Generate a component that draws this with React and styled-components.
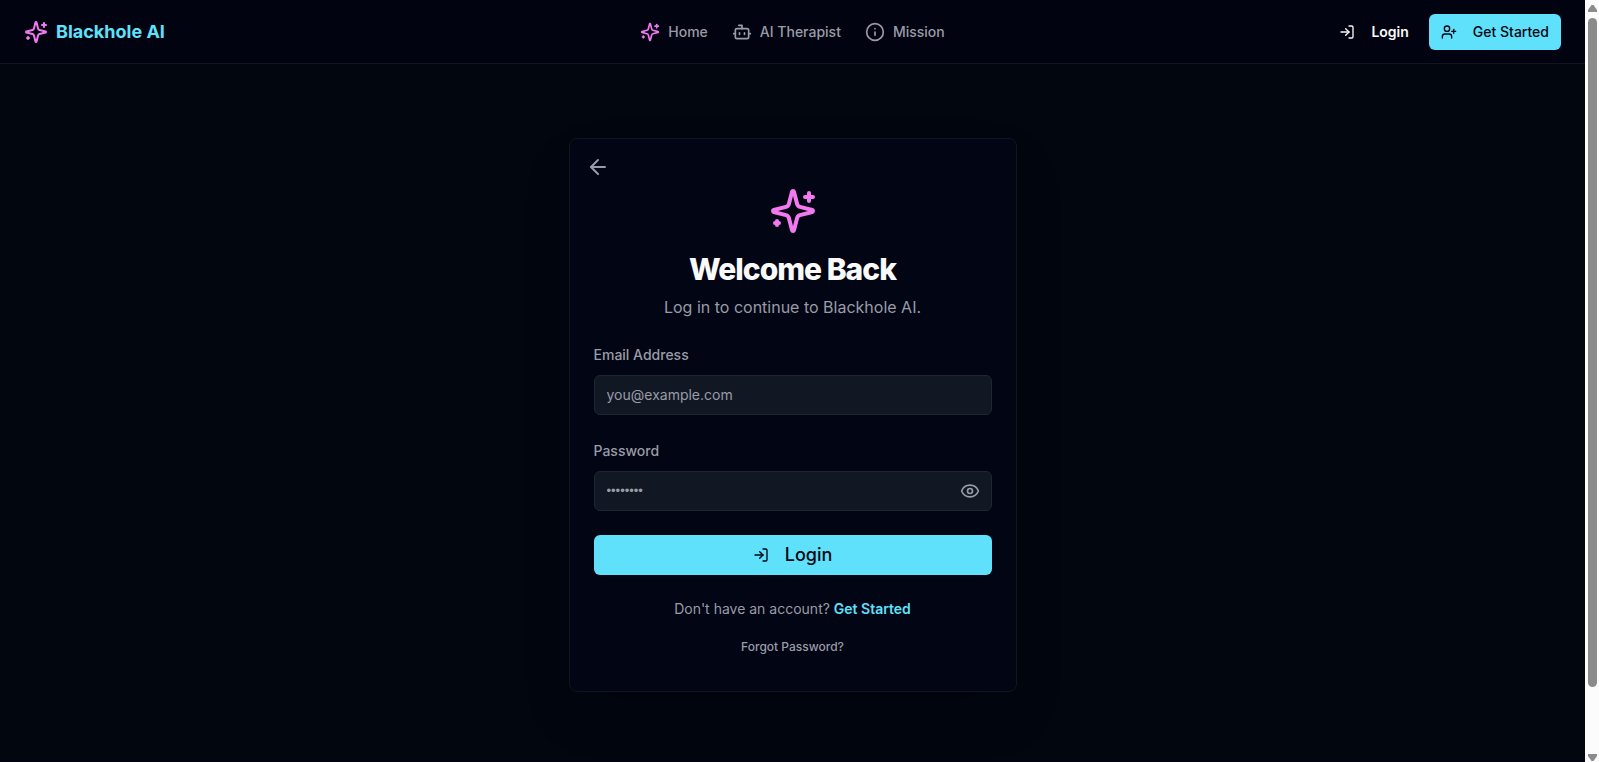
import React, { useState } from "react";
import styled, { createGlobalStyle } from "styled-components";
import { ArrowLeft, Bot, Eye, Info, LogIn, UserPlus } from "lucide-react";

const color = {
  page: "#02060f",
  header: "#020310",
  card: "#020513",
  line: "#10151f",
  field: "#111823",
  fieldLine: "#1d2932",
  cyan: "#5fe1fc",
  pink: "#f478f0",
  text: "#fafafa",
  muted: "#999ca7",
  ink: "#02060f",
};

const GlobalStyle = createGlobalStyle`
  *, *::before, *::after { box-sizing: border-box; }
  body {
    margin: 0;
    background: ${color.page};
    color: ${color.text};
    font-family: Inter, "Liberation Sans", sans-serif;
    font-size: 14px;
    line-height: 20px;
  }
  button, input { font: inherit; color: inherit; }
  button { border: 0; padding: 0; background: none; cursor: pointer; }
  a { color: inherit; text-decoration: none; }
  svg { display: block; flex-shrink: 0; }
`;

const Frame = styled.div`
  display: flex;
  height: 100vh;
  overflow: hidden;
`;

const Page = styled.div`
  display: flex;
  flex: 1;
  flex-direction: column;
  min-width: 0;
`;

const Header = styled.header`
  display: grid;
  grid-template-columns: 1fr auto 1fr;
  flex-shrink: 0;
  align-items: center;
  height: 64px;
  padding: 0 24px;
  background: ${color.header};
  border-bottom: 1px solid ${color.line};
`;

const Brand = styled.a`
  display: flex;
  align-items: center;
  justify-self: start;
  gap: 8px;
  color: ${color.cyan};
  font-size: 18px;
  font-weight: 700;
  line-height: 28px;
  svg { color: ${color.pink}; }
`;

const Nav = styled.nav`
  display: flex;
  gap: 24px;
`;

const NavLink = styled.a`
  display: flex;
  align-items: center;
  gap: 8px;
  color: ${color.muted};
  font-weight: 500;
  svg { color: ${(p) => (p.$accent ? color.pink : "inherit")}; }
`;

const Actions = styled.div`
  display: flex;
  justify-self: end;
  gap: 8px;
`;

const Button = styled.button`
  display: flex;
  align-items: center;
  justify-content: center;
  gap: 16px;
  width: ${(p) => (p.$wide ? "100%" : "auto")};
  height: ${(p) => (p.$wide ? "40px" : "36px")};
  padding: 0 12px;
  border-radius: 6px;
  font-size: ${(p) => (p.$wide ? "18px" : "14px")};
  font-weight: ${(p) => (p.$ghost ? 600 : 500)};
  color: ${(p) => (p.$ghost ? color.text : color.ink)};
  background: ${(p) => (p.$ghost ? "transparent" : color.cyan)};
`;

const Main = styled.main`
  display: flex;
  flex-shrink: 0;
  justify-content: center;
  padding: 74px 16px 68px;
`;

const Card = styled.section`
  display: flex;
  flex-direction: column;
  width: 100%;
  max-width: 448px;
  padding: 16px 24px 28px;
  background: ${color.card};
  border: 1px solid ${color.line};
  border-radius: 8px;
  box-shadow: 0 25px 50px -12px rgba(0, 0, 8, 0.3);
`;

const BackButton = styled.button`
  align-self: flex-start;
  margin-left: -8px;
  color: ${color.muted};
`;

const Intro = styled.div`
  display: flex;
  flex-direction: column;
  align-items: center;
  padding: 8px 0 24px;
  text-align: center;
  svg { color: ${color.pink}; }
`;

const Title = styled.h1`
  margin: 16px 0 8px;
  font-size: 30px;
  font-weight: 800;
  line-height: 36px;
  letter-spacing: -1px;
`;

const Subtitle = styled.p`
  margin: 0;
  color: ${color.muted};
  font-size: 16px;
  line-height: 24px;
`;

const Form = styled.form`
  display: flex;
  flex-direction: column;
  gap: 24px;
`;

const Field = styled.div`
  display: flex;
  flex-direction: column;
  gap: 8px;
`;

const Label = styled.label`
  color: ${color.muted};
  font-weight: 500;
  line-height: 24px;
`;

const InputBox = styled.div`
  display: flex;
  align-items: center;
  height: 40px;
  padding: 0 11px 0 12px;
  background: ${color.field};
  border: 1px solid ${color.fieldLine};
  border-radius: 6px;
`;

const Input = styled.input`
  flex: 1;
  min-width: 0;
  padding: 0;
  border: 0;
  outline: 0;
  background: transparent;
  &::placeholder { color: ${color.muted}; opacity: 1; }
`;

const PasswordInput = styled(Input)`
  font-family: "Liberation Sans", sans-serif;
  font-size: 13px;
`;

const RevealButton = styled.button`
  color: ${color.muted};
`;

const SignUp = styled.p`
  margin: 24px 0 12px;
  color: ${color.muted};
  text-align: center;
`;

const SignUpLink = styled.a`
  color: ${color.cyan};
  font-weight: 600;
`;

const ForgotLink = styled.a`
  align-self: center;
  color: ${color.muted};
  font-size: 12px;
  font-weight: 500;
  line-height: 32px;
`;

const Footer = styled.footer`
  flex: 1;
  background: ${color.header};
`;

const ScrollTrack = styled.div`
  display: flex;
  flex-direction: column;
  align-items: center;
  width: 14px;
  padding: 5px 0 1px;
  background: #fcfcfc;
`;

const ScrollThumb = styled.div`
  flex: 1;
  width: 9px;
  margin: 6px 0 67px;
  border-radius: 5px;
  background: #8b8b8b;
`;

const ScrollArrow = ({ down }) => (
  <svg width="9" height="7" viewBox="0 0 9 7" fill="#8b8b8b" aria-hidden="true">
    <path d={down ? "M0 0h9v2L5.5 7h-2L0 2Z" : "M0 7h9V5L5.5 0h-2L0 5Z"} />
  </svg>
);

const Sparkles = ({ size }) => (
  <svg
    width={size}
    height={size}
    viewBox="0 0 24 24"
    fill="none"
    stroke="currentColor"
    strokeWidth="2"
    strokeLinecap="round"
    strokeLinejoin="round"
    aria-hidden="true"
  >
    <path d="M9.937 15.5A2 2 0 0 0 8.5 14.063l-6.135-1.582a.5.5 0 0 1 0-.962L8.5 9.936A2 2 0 0 0 9.937 8.5l1.582-6.135a.5.5 0 0 1 .963 0L14.063 8.5A2 2 0 0 0 15.5 9.937l6.135 1.581a.5.5 0 0 1 0 .964L15.5 14.063a2 2 0 0 0-1.437 1.437l-1.582 6.135a.5.5 0 0 1-.963 0z" />
    <path d="M20 3v4" />
    <path d="M22 5h-4" />
    <path d="M4 17v2" />
    <path d="M5 18H3" />
  </svg>
);

export default function App() {
  const [shown, setShown] = useState(false);
  return (
    <Frame>
      <GlobalStyle />
      <Page>
        <Header>
          <Brand href="#"><Sparkles size={24} />Blackhole AI</Brand>
          <Nav>
            <NavLink href="#" $accent><Sparkles size={20} />Home</NavLink>
            <NavLink href="#"><Bot size={20} />AI Therapist</NavLink>
            <NavLink href="#"><Info size={20} />Mission</NavLink>
          </Nav>
          <Actions>
            <Button type="button" $ghost><LogIn size={16} />Login</Button>
            <Button type="button"><UserPlus size={16} />Get Started</Button>
          </Actions>
        </Header>
        <Main>
          <Card>
            <BackButton type="button" aria-label="Back"><ArrowLeft size={24} /></BackButton>
            <Intro>
              <Sparkles size={48} />
              <Title>Welcome Back</Title>
              <Subtitle>Log in to continue to Blackhole AI.</Subtitle>
            </Intro>
            <Form onSubmit={(e) => e.preventDefault()}>
              <Field>
                <Label htmlFor="email">Email Address</Label>
                <InputBox>
                  <Input id="email" type="email" placeholder="you@example.com" />
                </InputBox>
              </Field>
              <Field>
                <Label htmlFor="password">Password</Label>
                <InputBox>
                  <PasswordInput id="password" type={shown ? "text" : "password"} placeholder="••••••••" />
                  <RevealButton type="button" aria-label="Show password" onClick={() => setShown(!shown)}>
                    <Eye size={20} />
                  </RevealButton>
                </InputBox>
              </Field>
              <Button type="submit" $wide><LogIn size={16} />Login</Button>
            </Form>
            <SignUp>Don't have an account? <SignUpLink href="#">Get Started</SignUpLink></SignUp>
            <ForgotLink href="#">Forgot Password?</ForgotLink>
          </Card>
        </Main>
        <Footer />
      </Page>
      <ScrollTrack aria-hidden="true">
        <ScrollArrow />
        <ScrollThumb />
        <ScrollArrow down />
      </ScrollTrack>
    </Frame>
  );
}
